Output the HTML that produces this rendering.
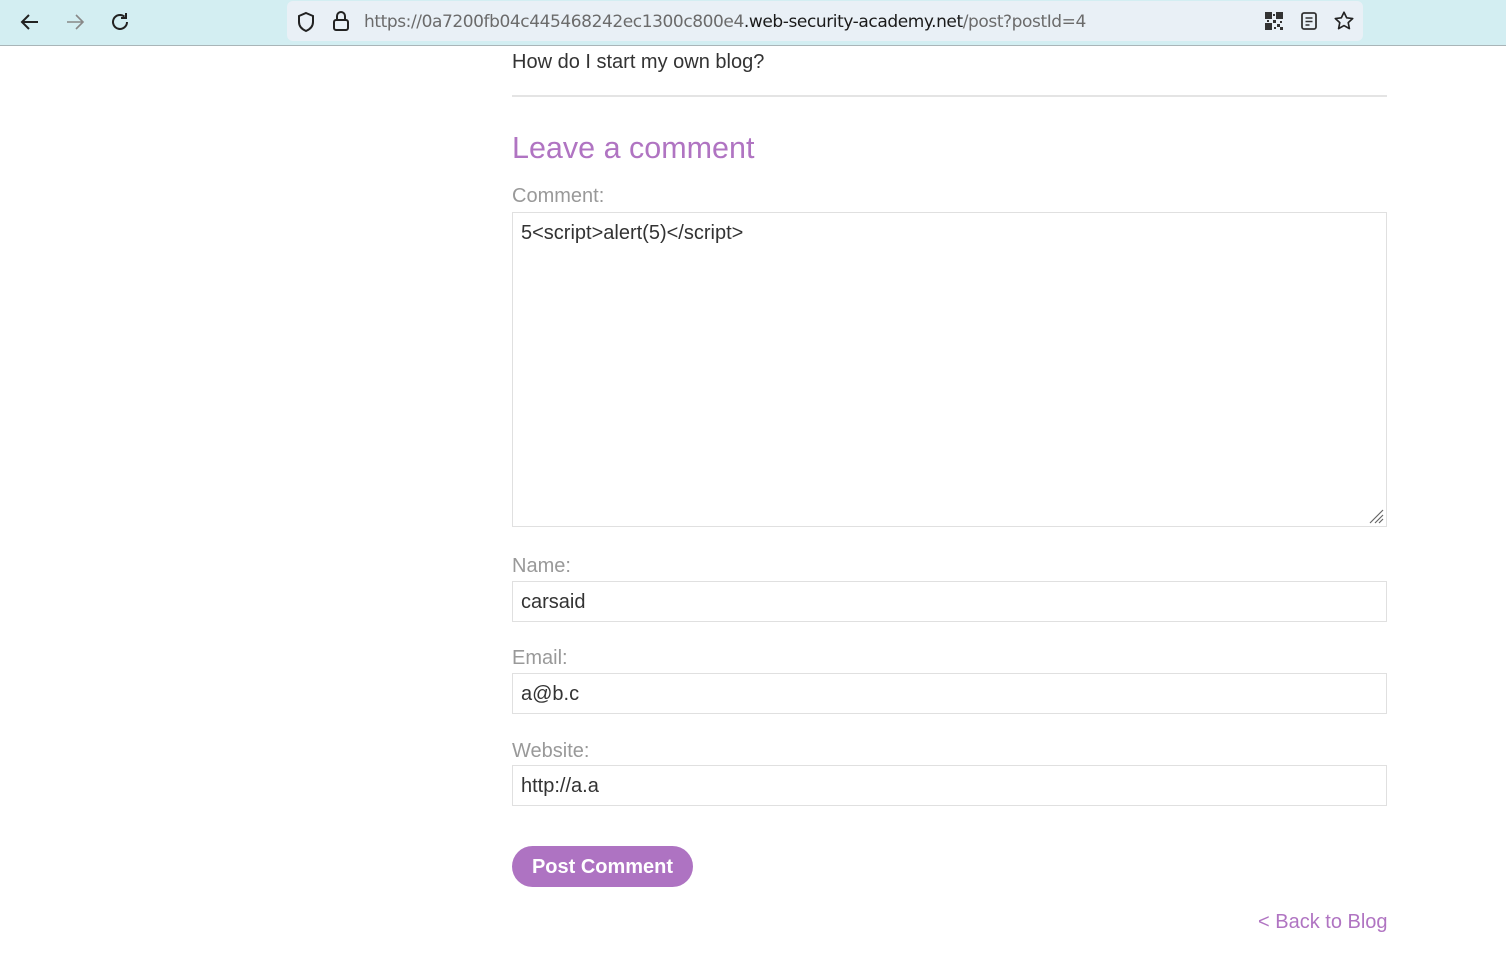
<!DOCTYPE html>
<html><head><style>
body{margin:0;width:1506px;height:955px;overflow:hidden;background:#fff;font-family:"Liberation Sans",sans-serif;position:relative}
.bar{position:absolute;left:0;top:0;width:1506px;height:45px;background:#d3eef2;border-bottom:1px solid #a9b5b8}
.url{position:absolute;left:287px;top:1px;width:1076px;height:40px;background:#e9f0f6;border-radius:6px}
.urltext{position:absolute;left:364px;top:12px;color:#6b6b6b;font-family:"DejaVu Sans","Liberation Sans",sans-serif;letter-spacing:-0.42px;font-size:17px}
.urltext b{font-weight:normal;color:#1a1a1a}
.abs{position:absolute}
.lbl{position:absolute;left:512px;font-size:20px;color:#999}
.inp{position:absolute;left:512px;width:875px;border:1px solid #e0e0e0;font-size:20px;color:#333;box-sizing:border-box;padding-left:8px}
</style></head><body>
<div class="bar">
<svg class="abs" style="left:18px;top:10px" width="24" height="24" viewBox="0 0 24 24"><path d="M20 12H4M11 5l-7 7 7 7" stroke="#222" stroke-width="2" fill="none"/></svg>
<svg class="abs" style="left:63px;top:10px" width="24" height="24" viewBox="0 0 24 24"><path d="M4 12h16M13 5l7 7-7 7" stroke="#888" stroke-width="1.6" fill="none"/></svg>
<svg class="abs" style="left:108px;top:10px" width="24" height="24" viewBox="0 0 24 24"><path d="M19 12a7 7 0 1 1-2.5-5.4" stroke="#222" stroke-width="2" fill="none"/><path d="M18 3v5h-5" stroke="#222" stroke-width="2" fill="none"/></svg>
<div class="url"></div>
<svg class="abs" style="left:295px;top:10px" width="22" height="24" viewBox="0 0 22 24"><path d="M11 3l7 3v6c0 5-3.5 7.5-7 9-3.5-1.5-7-4-7-9V6z" stroke="#222" stroke-width="2" fill="none"/></svg>
<svg class="abs" style="left:331px;top:9px" width="20" height="24" viewBox="0 0 20 24"><rect x="3" y="11" width="14" height="10" rx="2" stroke="#222" stroke-width="2" fill="none"/><path d="M6 11V7a4 4 0 0 1 8 0v4" stroke="#222" stroke-width="2" fill="none"/></svg>
<div class="urltext">https://0a7200fb04c445468242ec1300c800e4<b>.web-security-academy.net</b>/post?postId=4</div>
<svg class="abs" style="left:1265px;top:12px" width="18" height="18" viewBox="0 0 18 18" fill="#333"><rect x="0" y="0" width="7" height="7"/><rect x="11" y="0" width="7" height="7"/><rect x="0" y="11" width="7" height="7"/><rect x="8" y="8" width="3" height="3"/><rect x="12" y="12" width="3" height="3"/><rect x="15" y="15" width="3" height="3"/><rect x="8" y="2" width="2" height="2"/><rect x="2" y="8" width="2" height="2"/><rect x="15" y="9" width="2" height="2"/><rect x="9" y="15" width="2" height="2"/></svg>
<svg class="abs" style="left:1300px;top:11px" width="18" height="20" viewBox="0 0 18 20"><rect x="2" y="2" width="14" height="16" rx="2" stroke="#333" stroke-width="1.8" fill="none"/><path d="M5.5 7h7M5.5 10.5h7M5.5 14h4" stroke="#333" stroke-width="1.6"/></svg>
<svg class="abs" style="left:1333px;top:10px" width="22" height="22" viewBox="0 0 24 24"><path d="M12 2.5l2.9 6 6.6.8-4.9 4.5 1.3 6.5L12 17l-5.9 3.3 1.3-6.5-4.9-4.5 6.6-.8z" stroke="#222" stroke-width="1.8" fill="none" stroke-linejoin="round"/></svg>
</div>
<div class="abs" style="left:512px;top:51px;font-size:20px;color:#333">How do I start my own blog?</div>
<div class="abs" style="left:512px;top:95px;width:875px;height:2px;background:#e4e4e4"></div>
<div class="abs" style="left:512px;top:131px;font-size:30.5px;color:#b074c2">Leave a comment</div>
<div class="lbl" style="top:185px">Comment:</div>
<div class="inp" style="top:212px;height:315px;padding-top:9px">5&lt;script&gt;alert(5)&lt;/script&gt;</div>
<svg class="abs" style="left:1368px;top:508px" width="16" height="16"><path d="M2 15L15 2M7 15l8-8M11 15l4-4" stroke="#666" stroke-width="1.2"/></svg>
<div class="lbl" style="top:555px">Name:</div>
<div class="inp" style="top:581px;height:41px;line-height:41px">carsaid</div>
<div class="lbl" style="top:647px">Email:</div>
<div class="inp" style="top:673px;height:41px;line-height:41px">a@b.c</div>
<div class="lbl" style="top:740px">Website:</div>
<div class="inp" style="top:765px;height:41px;line-height:41px">http://a.a</div>
<div class="abs" style="left:512px;top:846px;width:181px;height:41px;border-radius:21px;background:#ae73c2;color:#fff;font-weight:bold;font-size:20px;line-height:42px;text-align:center">Post Comment</div>
<div class="abs" style="left:1258px;top:911px;font-size:20px;color:#b074c2">&lt; Back to Blog</div>
</body></html>
